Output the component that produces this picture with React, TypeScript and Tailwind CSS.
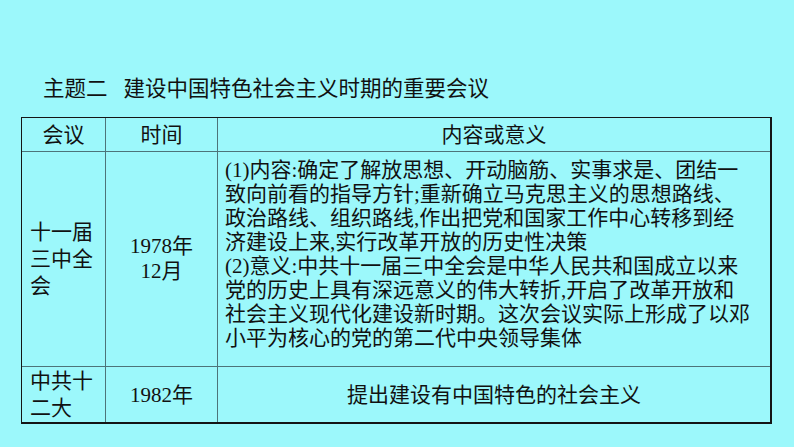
const font = {
  fontFamily: '"Liberation Serif", "Noto Sans CJK SC", sans-serif',
}

const body = [
  '(1)内容:确定了解放思想、开动脑筋、实事求是、团结一',
  '致向前看的指导方针;重新确立马克思主义的思想路线、',
  '政治路线、组织路线,作出把党和国家工作中心转移到经',
  '济建设上来,实行改革开放的历史性决策',
  '(2)意义:中共十一届三中全会是中华人民共和国成立以来',
  '党的历史上具有深远意义的伟大转折,开启了改革开放和',
  '社会主义现代化建设新时期。这次会议实际上形成了以邓',
  '小平为核心的党的第二代中央领导集体',
]

export default function App() {
  return (
    <div
      className="w-[794px] h-[447px] bg-[#9cf8fb] text-[#111] overflow-hidden"
      style={font}
    >
      <div className="pt-[76px] pl-[43px] h-[102px] text-[21.5px] leading-[26px] flex">
        <span>主题二</span>
        <span className="ml-[16px]">建设中国特色社会主义时期的重要会议</span>
      </div>

      <div className="mt-[15px] ml-[21px] w-[751px] border-t border-l border-r-2 border-b-2 border-[#151515] grid grid-cols-[84px_112px_552px] grid-rows-[34px_215px_55px] text-[21px]">
        {/* header */}
        <div className="border-r border-b border-[#4d7479] flex items-center justify-center leading-[24px]">
          会议
        </div>
        <div className="border-r border-b border-[#4d7479] flex items-center justify-center leading-[24px]">
          时间
        </div>
        <div className="border-b border-[#4d7479] flex items-center justify-center leading-[24px]">
          内容或意义
        </div>

        {/* 三中全会 */}
        <div className="border-r border-b border-[#4d7479] flex items-center pl-[8px] leading-[27px]">
          <span>
            十一届
            <br />
            三中全
            <br />会
          </span>
        </div>
        <div className="border-r border-b border-[#4d7479] flex items-center justify-center text-center leading-[25px]">
          <span>
            1978年
            <br />
            12月
          </span>
        </div>
        <div className="border-b border-[#4d7479] pt-[6px] pl-[7px] leading-[24px] whitespace-nowrap">
          {body.map((line) => (
            <div key={line}>{line}</div>
          ))}
        </div>

        {/* 十二大 */}
        <div className="border-r border-[#4d7479] flex items-center pl-[8px] leading-[27px]">
          <span>
            中共十
            <br />
            二大
          </span>
        </div>
        <div className="border-r border-[#4d7479] flex items-center justify-center leading-[24px]">
          1982年
        </div>
        <div className="flex items-center justify-center leading-[24px]">
          提出建设有中国特色的社会主义
        </div>
      </div>
    </div>
  )
}
